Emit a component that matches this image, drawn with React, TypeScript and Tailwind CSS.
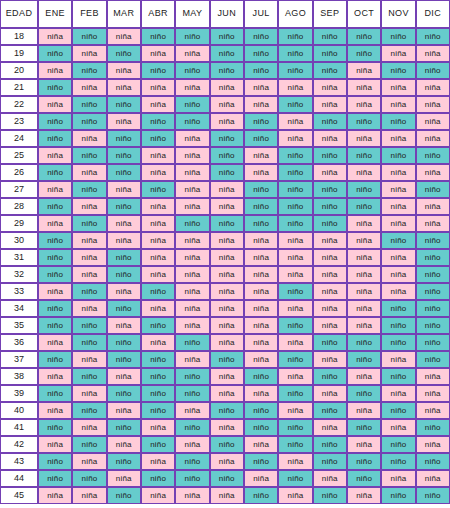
import { Fragment } from "react";

const MONTHS = ["ENE", "FEB", "MAR", "ABR", "MAY", "JUN", "JUL", "AGO", "SEP", "OCT", "NOV", "DIC"];

// o = niño, a = niña — one string per age, from 18 to 45
const CHART = [
  "aoaooooooooo",
  "oaoaaoooooaa",
  "aoaooooooaoo",
  "oaaaaaaaaaaa",
  "aooaoaaoaaaa",
  "ooaooaoaoooa",
  "oaooaooaaaaa",
  "aooaaoaooooo",
  "oaoaaoaoaaaa",
  "aoaoaaooooao",
  "oaoaaaooooaa",
  "aoaaoooooaaa",
  "oaaaaaaaaaoo",
  "oaoaaaaaaaao",
  "oaoaaaaaaaao",
  "aoaoaaaoaaao",
  "oaoaaaaaaaoo",
  "ooaoaaaoaaoo",
  "aooaoaaaoooo",
  "oaooaoaoaoao",
  "aoaooaoaoaoa",
  "oaoooaaoaoaa",
  "aoaoaooaoaoa",
  "oaoaoaooaoao",
  "aoaoaoaooaoa",
  "oaoaoaoaoooo",
  "ooaoooaoaoaa",
  "aaoaaaoaoaoo",
];

export default function App() {
  return (
    <div className="h-[508px] w-[450px] bg-white" style={{ fontFamily: '"Liberation Sans", Arial, sans-serif' }}>
      <div className="grid grid-cols-[36px_repeat(12,1fr)] grid-rows-[26px] auto-rows-[15px] gap-[2px] bg-[#7440b4] p-[1px] text-[#222]">
        <div className="flex items-center justify-center bg-white text-[9px] tracking-[0.4px]">EDAD</div>
        {MONTHS.map((m) => (
          <div key={m} className="flex items-center justify-center bg-white text-[9px] tracking-[0.4px]">
            {m}
          </div>
        ))}
        {CHART.map((row, i) => (
          <Fragment key={i}>
            <div className="flex items-center justify-center bg-white text-[9px]">{18 + i}</div>
            {row.split("").map((c, j) => (
              <div
                key={j}
                className={`flex items-center justify-center text-[8px] tracking-[0.2px] ${
                  c === "o" ? "bg-[#66cccc]" : "bg-[#ffccd9]"
                }`}
              >
                {c === "o" ? "niño" : "niña"}
              </div>
            ))}
          </Fragment>
        ))}
      </div>
    </div>
  );
}
